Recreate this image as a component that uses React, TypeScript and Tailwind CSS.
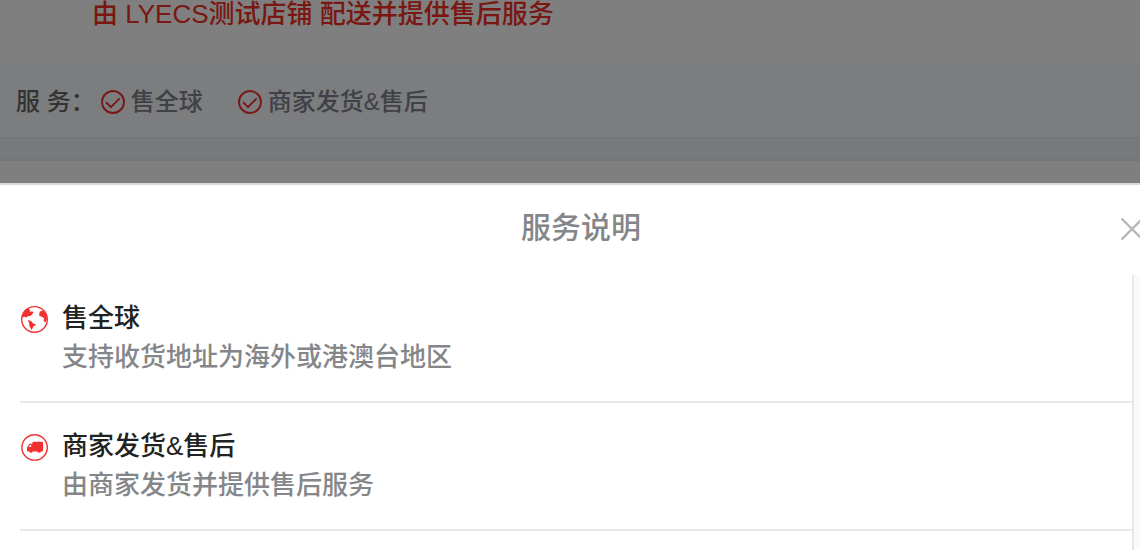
import type { ReactNode } from 'react';

type Service = {
  name: string;
  description: string;
  icon: ReactNode;
};

function CheckIcon() {
  return (
    <svg className="size-6 shrink-0" viewBox="0 0 24 24" fill="none" stroke="#f23030" strokeWidth="1.9" aria-hidden="true">
      <circle cx="12" cy="12" r="11" />
      <path d="M5 12.2 L10 17.2 L18.6 8.4" />
    </svg>
  );
}

function GlobeIcon() {
  return (
    <svg className="size-7 shrink-0" viewBox="0 0 28 28" aria-hidden="true">
      <circle cx="14.5" cy="14.4" r="12.8" fill="none" stroke="#f23030" strokeWidth="1.4" />
      <g fill="#f23030">
        <path d="M2.2 12.6 C2.8 8.8 5 5 8.6 3 L10 5.4 L9.4 6.6 L12.8 6.4 L13.4 7.6 L12 9.8 L9.6 11.2 L7.6 11.2 L6.4 12.8 L4.6 11.8 Z" />
        <path d="M19.2 8.2 L20.4 6.2 L23 5.6 C25.8 8.2 27.2 11.4 26.8 14.6 L25.2 17.8 L23.6 15.8 L24 13 L21.8 11.8 L19.4 11 Z" />
        <path d="M7.8 14.8 L11.4 16.2 L12.6 18 L16.4 20 L13.4 21.2 L11.8 25 L9.6 21.8 L9.2 18.2 Z" />
      </g>
    </svg>
  );
}

function TruckIcon() {
  return (
    <svg className="size-7 shrink-0" viewBox="0 0 28 28" aria-hidden="true">
      <circle cx="14.6" cy="14.4" r="12.7" fill="none" stroke="#f23030" strokeWidth="1.4" />
      <path
        fill="#f23030"
        fillRule="evenodd"
        d="M13.4 8.8 H22 Q23 8.8 23 9.8 V17.6 Q23 18.6 22 18.6 H8 Q7 18.6 7 17.6 V14.4 L9.4 10.8 H12.4 V9.8 Q12.4 8.8 13.4 8.8 Z M10 12 L8.8 14 H11.2 V12 Z"
      />
      <circle cx="11" cy="18.2" r="1.5" fill="#f23030" />
      <circle cx="19.2" cy="18.2" r="1.5" fill="#f23030" />
    </svg>
  );
}

const services: Service[] = [
  { name: '售全球', description: '支持收货地址为海外或港澳台地区', icon: <GlobeIcon /> },
  { name: '商家发货&售后', description: '由商家发货并提供售后服务', icon: <TruckIcon /> },
];

export default function App() {
  return (
    <div
      lang="zh-CN"
      className="min-h-screen overflow-hidden bg-white font-['Liberation_Sans','Noto_Sans_CJK_SC',sans-serif] font-medium"
    >
      {/* Product page */}
      <main>
        <p className="h-16 pl-[92px] text-[26px] leading-7 text-[#f23024]">由 LYECS测试店铺 配送并提供售后服务</p>

        <div className="flex h-[73px] items-center bg-[#f8fafd] pt-0.5 pl-4 text-2xl">
          <span className="text-[#666]">服 务{'\uff1a'}</span>
          <ul className="flex gap-[35px] pl-[6px] text-[#81838e]">
            {services.map((service) => (
              <li key={service.name} className="flex items-center gap-[6px]">
                <CheckIcon />
                {service.name}
              </li>
            ))}
          </ul>
        </div>
        <div className="h-6 border-y-2 border-[#e8eaed] bg-[#f0f2f5]" />
      </main>

      <div className="fixed inset-0 bg-black/50" />

      {/* Service sheet */}
      <section
        role="dialog"
        aria-labelledby="sheet-title"
        className="fixed inset-x-0 top-[183px] bottom-0 flex flex-col overflow-hidden border-t-2 border-[#d9d9d9] bg-white"
      >
        <header className="relative flex h-[90px] shrink-0 justify-center pt-5 pl-[22px]">
          <h2 id="sheet-title" className="text-3xl leading-[46px] text-[#848689]">服务说明</h2>
          <button type="button" aria-label="关闭" className="absolute top-8 -right-1 size-6">
            <svg viewBox="0 0 24 24" fill="none" stroke="#b8b8b8" strokeWidth="2.4" aria-hidden="true">
              <path d="M1.5 1.5 L22.5 22.5 M22.5 1.5 L1.5 22.5" />
            </svg>
          </button>
        </header>

        <div className="flex min-h-0 grow">
          <ul className="grow pl-5">
            {services.map((service) => (
              <li key={service.name} className="flex gap-[14px] border-b-2 border-[#e8e8e8] py-6">
                <div className="pt-[6px]">{service.icon}</div>
                <div className="text-[26px] leading-[39px]">
                  <h3 className="text-[#222]">{service.name}</h3>
                  <p className="text-[#848689]">{service.description}</p>
                </div>
              </li>
            ))}
          </ul>
          {/* Scroll track */}
          <div className="w-2 shrink-0 border-l-2 border-[#e7e7e7] bg-[#fafafa]" />
        </div>
      </section>
    </div>
  );
}
